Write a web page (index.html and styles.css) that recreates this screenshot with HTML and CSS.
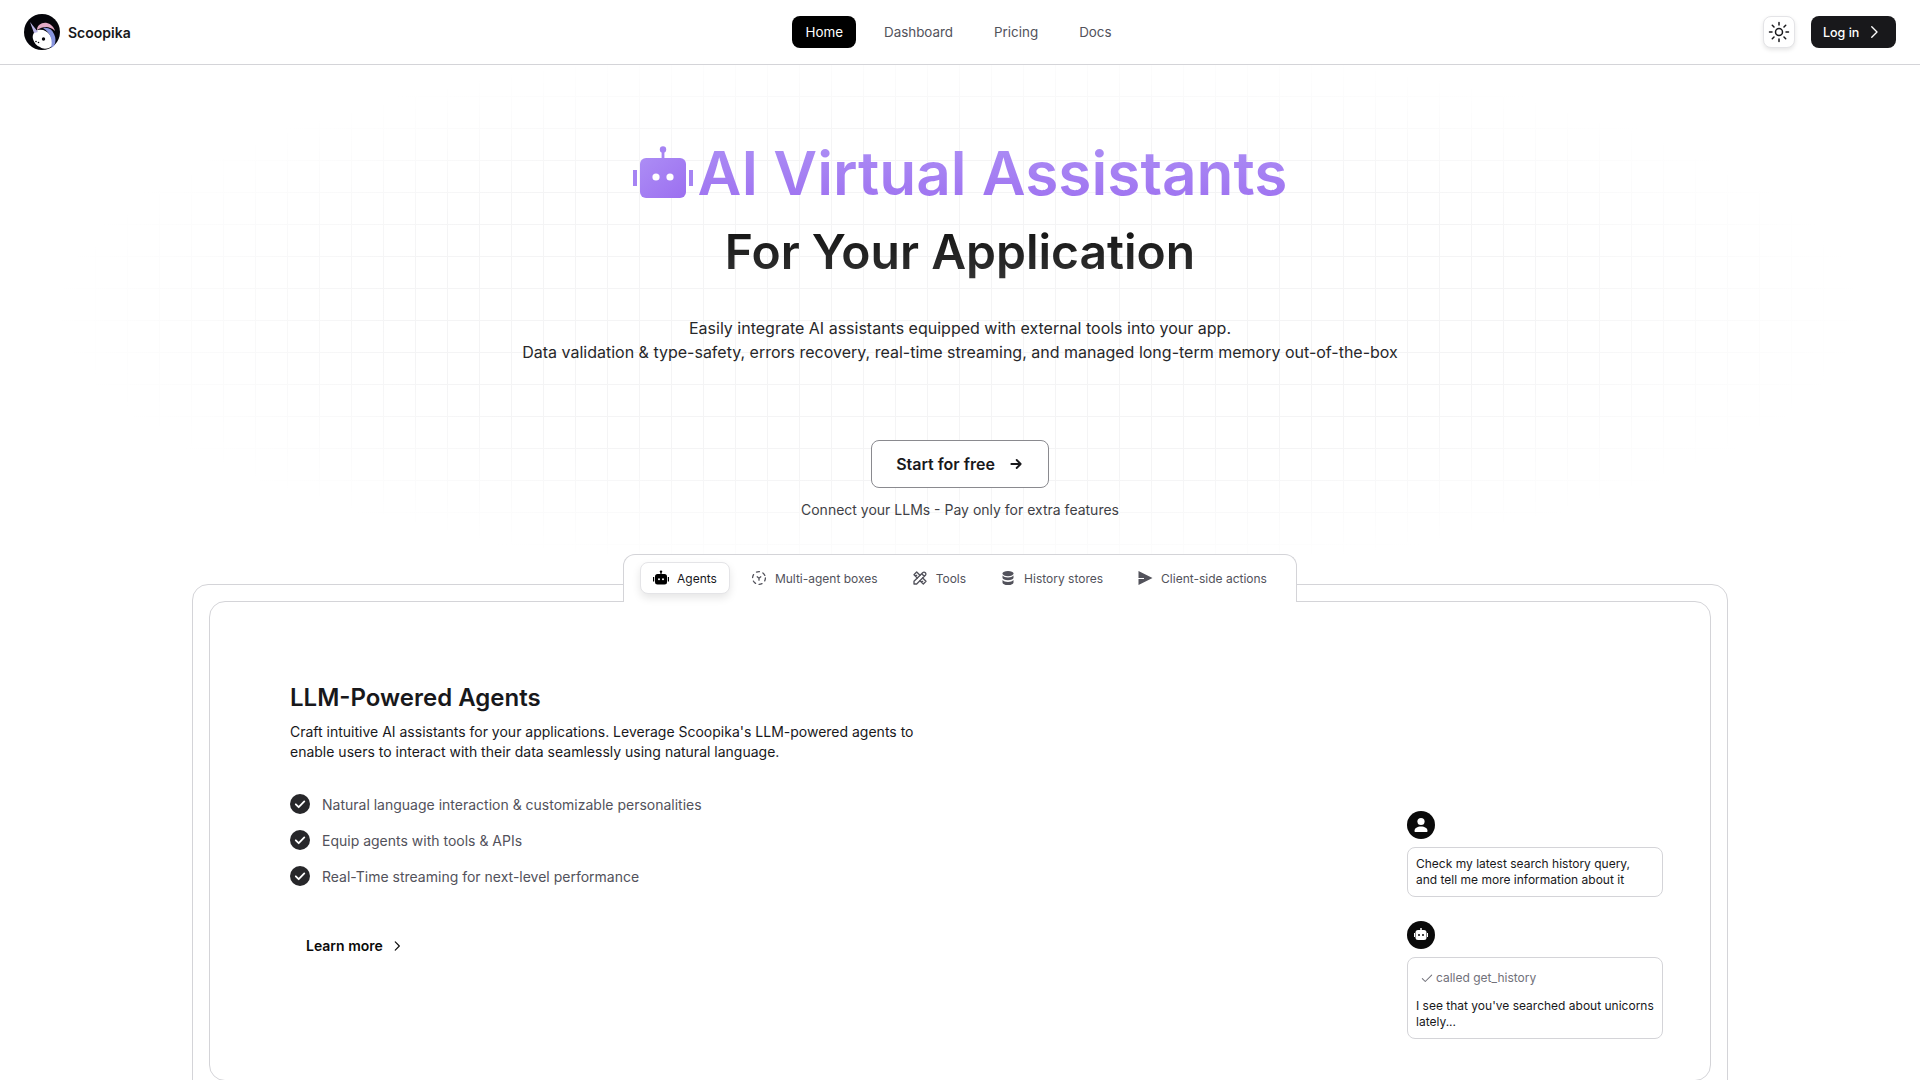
FILE: index.html
```html
<!DOCTYPE html>
<html lang="en">

<head>
  <meta charset="UTF-8">
  <meta name="viewport" content="width=device-width, initial-scale=1.0">
  <title>Scoopika</title>
  <link rel="stylesheet" href="styles.css">
</head>

<body>
  <nav class="navbar">
    <a href="#" class="brand">
      <svg class="brand-logo" viewBox="0 0 36 36">
        <circle cx="18" cy="18" r="18" fill="#05050a" />
        <path d="M9 25c-1-4 1-8 5-9 5-1 9 1 12 5 2 3 3 6 3 8 0 2-2 4-4 5-3 1-7 1-9-1-3-1-6-4-7-8z" fill="#fff" />
        <path d="M6 8l8 10-4 1z" fill="#b9b4e6" />
        <path d="M13 16c0-5 5-8 10-7 4 1 7 4 8 8-3-3-6-4-9-4-3 0-6 1-9 3z" fill="#e3aac6" />
        <path d="M19 14c5-1 9 1 11 6 2 4 2 8 0 12l-3 2c2-7 0-15-8-20z" fill="#8794de" />
        <circle cx="19.500" cy="25" r="1.700" fill="#05050a" />
        <circle cx="12" cy="27.500" r=".8" fill="#05050a" />
        <circle cx="14.500" cy="28.500" r=".8" fill="#05050a" />
      </svg>
      <span>Scoopika</span>
    </a>
    <div class="nav-links">
      <a href="#" class="nav-link active">Home</a>
      <a href="#" class="nav-link">Dashboard</a>
      <a href="#" class="nav-link">Pricing</a>
      <a href="#" class="nav-link">Docs</a>
    </div>
    <div class="nav-actions">
      <button class="theme-btn" aria-label="Theme">
        <svg viewBox="0 0 24 24" class="icon-stroke">
          <circle cx="12" cy="12" r="3.500" />
          <path d="M2.500 12H5M19 12h2.500M12 2.500V5M12 19v2.500M5.300 5.300L7 7M17 17l1.700 1.700M5.300 18.700L7 17M17 7l1.700-1.700" />
        </svg>
      </button>
      <a href="#" class="login-btn">
        Log in
        <svg viewBox="0 0 24 24" class="icon-stroke">
          <path d="M9 5l7 7-7 7" />
        </svg>
      </a>
    </div>
  </nav>

  <header class="hero">
    <h1 class="hero-title">
      <svg class="hero-robot" viewBox="0 0 60 52">
        <defs>
          <linearGradient id="robotFill" x1="0" y1="0" x2="1" y2="1">
            <stop offset="0" stop-color="#ac8df5" />
            <stop offset="1" stop-color="#9c6ff0" />
          </linearGradient>
        </defs>
        <circle cx="30" cy="3.500" r="3.200" fill="#a684f3" />
        <rect x="28.600" y="4" width="2.800" height="9" fill="#a684f3" />
        <rect x="7" y="12" width="46" height="40" rx="6" fill="url(#robotFill)" />
        <rect x="0" y="24" width="4" height="16" fill="#a684f3" />
        <rect x="56" y="24" width="4" height="16" fill="#a684f3" />
        <circle cx="23" cy="31" r="3.600" fill="#fff" />
        <circle cx="37" cy="31" r="3.600" fill="#fff" />
      </svg>
      <span class="gradient-text">AI Virtual Assistants</span>
    </h1>
    <h2 class="hero-sub">For Your Application</h2>
    <p class="hero-text">Easily integrate AI assistants equipped with external tools into your app.<br>Data validation &amp; type-safety, errors recovery, real-time streaming, and managed long-term memory out-of-the-box</p>
    <a href="#" class="start-btn">
      Start for free
      <svg viewBox="0 0 24 24" class="icon-stroke">
        <path d="M5 12h14M13 6l6 6-6 6" />
      </svg>
    </a>
    <p class="hero-note">Connect your LLMs - Pay only for extra features</p>
  </header>

  <section class="showcase">
    <div class="tabs-wrap">
      <div class="tabs">
        <div class="tab active">
          <svg viewBox="0 0 16 16" class="tab-icon">
            <circle cx="8" cy="1.600" r="1.200" />
            <rect x="7.400" y="2" width="1.200" height="2.500" />
            <rect x="2" y="4" width="12" height="10.500" rx="2.500" />
            <rect x="0" y="7" width="1.200" height="4.500" />
            <rect x="14.800" y="7" width="1.200" height="4.500" />
            <circle cx="6" cy="9.200" r="1" fill="#fff" />
            <circle cx="10" cy="9.200" r="1" fill="#fff" />
          </svg>
          Agents
        </div>
        <div class="tab">
          <svg viewBox="0 0 16 16" class="tab-icon tab-icon-line">
            <circle cx="8" cy="8" r="6.400" stroke-dasharray="3 3.700" />
            <path d="M6.200 6.800L8 8.200l1.800-1.400M8 8.200v2" />
          </svg>
          Multi-agent boxes
        </div>
        <div class="tab">
          <svg viewBox="0 0 24 24" class="tab-icon tab-icon-line tab-icon-tools">
            <path d="M3 21h4L20 8a1.500 1.500 0 0 0-4-4L3 17v4M14.500 5.500l4 4" />
            <path d="M12 8L7 3 3 7l5 5M7 8L5.500 9.500M16 12l5 5-4 4-5-5M16 17l-1.500 1.500" />
          </svg>
          Tools
        </div>
        <div class="tab">
          <svg viewBox="0 0 16 16" class="tab-icon">
            <ellipse cx="8" cy="3.600" rx="5.500" ry="2.600" />
            <path d="M2.500 5.600v2.200c0 1.400 2.500 2.500 5.500 2.500s5.500-1.100 5.500-2.500V5.600c-1 1.300-3.100 2-5.500 2s-4.500-.7-5.500-2z" />
            <path d="M2.500 10.100v2.300c0 1.400 2.500 2.600 5.500 2.600s5.500-1.200 5.500-2.600v-2.300c-1 1.300-3.100 2-5.500 2s-4.500-.7-5.500-2z" />
          </svg>
          History stores
        </div>
        <div class="tab">
          <svg viewBox="0 0 16 16" class="tab-icon">
            <path d="M1.500 1L15.500 8 1.500 15V9h5.500V8H1.500z" />
          </svg>
          Client-side actions
        </div>
      </div>
    </div>

    <div class="outer-card">
      <div class="inner-card">
        <div class="feature">
          <h3 class="feature-title">LLM-Powered Agents</h3>
          <p class="feature-text">Craft intuitive AI assistants for your applications. Leverage Scoopika's LLM-powered agents to enable users to interact with their data seamlessly using natural language.</p>
          <ul class="feature-list">
            <li>
              <svg viewBox="0 0 20 20" class="check-icon">
                <circle cx="10" cy="10" r="10" />
                <path d="M5.800 10.300l2.900 2.900 5.600-5.800" />
              </svg>
              Natural language interaction &amp; customizable personalities
            </li>
            <li>
              <svg viewBox="0 0 20 20" class="check-icon">
                <circle cx="10" cy="10" r="10" />
                <path d="M5.800 10.300l2.900 2.900 5.600-5.800" />
              </svg>
              Equip agents with tools &amp; APIs
            </li>
            <li>
              <svg viewBox="0 0 20 20" class="check-icon">
                <circle cx="10" cy="10" r="10" />
                <path d="M5.800 10.300l2.900 2.900 5.600-5.800" />
              </svg>
              Real-Time streaming for next-level performance
            </li>
          </ul>
          <a href="#" class="learn-more">
            Learn more
            <svg viewBox="0 0 24 24" class="icon-stroke">
              <path d="M9 5l7 7-7 7" />
            </svg>
          </a>
        </div>

        <div class="chat">
          <div class="avatar">
            <svg viewBox="0 0 28 28">
              <circle cx="14" cy="10.500" r="3.600" fill="#fff" />
              <path d="M7.500 20c0-3 2.800-4.600 6.500-4.600s6.500 1.600 6.500 4.600c0 .6-.4 1-1 1h-11c-.6 0-1-.4-1-1z" fill="#fff" />
            </svg>
          </div>
          <div class="bubble">Check my latest search history query, and tell me more information about it</div>
          <div class="avatar avatar-bot">
            <svg viewBox="0 0 28 28">
              <circle cx="14" cy="8" r="1" fill="#fff" />
              <rect x="8.500" y="9" width="11" height="10" rx="2.500" fill="#fff" />
              <rect x="7" y="12" width="1" height="4" fill="#fff" />
              <rect x="20" y="12" width="1" height="4" fill="#fff" />
              <circle cx="12" cy="14" r="1" fill="#0a0a0a" />
              <circle cx="16" cy="14" r="1" fill="#0a0a0a" />
            </svg>
          </div>
          <div class="bubble">
            <div class="tool-call">
              <svg viewBox="0 0 24 24" class="icon-stroke">
                <path d="M4 13l5 5L20 7" />
              </svg>
              called get_history
            </div>
            I see that you've searched about unicorns lately...
          </div>
        </div>
      </div>
    </div>
  </section>
</body>

</html>
```
FILE: styles.css
```css
:root {
  --dark-color: #18181b;
  --border-color: #d4d4d8;
  --muted-color: #52525b;
  --grid-color: #f4f4f5;
}

* {
  margin: 0;
  padding: 0;
  box-sizing: border-box;
}

body {
  font-family: 'Inter', 'Liberation Sans', sans-serif;
  background-color: #fff;
  color: var(--dark-color);
  height: 100vh;
  overflow: hidden;
}

a {
  color: inherit;
  text-decoration: none;
}

.icon-stroke {
  fill: none;
  stroke: currentColor;
  stroke-width: 2;
  stroke-linecap: round;
  stroke-linejoin: round;
}

/* navbar */
.navbar {
  display: grid;
  grid-template-columns: 1fr auto 1fr;
  align-items: center;
  height: 65px;
  padding: 0 24px;
  border-bottom: 1px solid var(--border-color);
}

.brand {
  display: flex;
  align-items: center;
  gap: 8px;
  font-size: 14px;
  font-weight: 600;
}

.brand-logo {
  width: 36px;
  height: 36px;
}

.nav-links {
  display: flex;
  align-items: center;
  gap: 15px;
  margin-right: 3px;
}

.nav-link {
  display: flex;
  align-items: center;
  height: 32px;
  padding: 0 13px;
  border-radius: 8px;
  font-size: 13.4px;
  color: var(--muted-color);
}

.nav-link.active {
  background-color: #000;
  color: #fff;
}

.nav-actions {
  display: flex;
  justify-content: flex-end;
  align-items: center;
  gap: 16px;
}

.theme-btn {
  display: flex;
  align-items: center;
  justify-content: center;
  width: 32px;
  height: 32px;
  background: #fff;
  border: 1px solid #e4e4e7;
  border-radius: 8px;
  box-shadow: 0 2px 4px rgba(0, 0, 0, 0.1);
  color: #18181b;
}

.theme-btn svg {
  width: 24px;
  height: 24px;
  stroke-width: 1.5;
}

.login-btn {
  display: flex;
  align-items: center;
  justify-content: space-between;
  width: 85px;
  height: 32px;
  padding: 0 13px 0 12px;
  background-color: #18181b;
  border-radius: 8px;
  color: #fff;
  font-size: 12.5px;
  font-weight: 500;
}

.login-btn svg {
  width: 18px;
  height: 18px;
  stroke-width: 1.8;
}

/* hero */
.hero {
  display: flex;
  flex-direction: column;
  align-items: center;
  height: 489px;
  padding-top: 73px;
  text-align: center;
  background-image:
    radial-gradient(ellipse 47% 56% at 50% 50%, rgba(255, 255, 255, 0) 62%, #fff 100%),
    linear-gradient(to right, transparent 31px, var(--grid-color) 31px),
    linear-gradient(to bottom, transparent 31px, var(--grid-color) 31px);
  background-size: 100% 100%, 32px 32px, 32px 32px;
  background-position: 0 0, 0 0, 0 0;
}

.hero-title {
  display: flex;
  align-items: center;
  gap: 5px;
  font-size: 60.3px;
  line-height: 72px;
  font-weight: 600;
}

.hero-robot {
  width: 60px;
  height: 52px;
  margin-top: -4px;
}

.gradient-text {
  background: linear-gradient(to bottom, #ad90f5, #9d6ff0);
  -webkit-background-clip: text;
  background-clip: text;
  color: transparent;
}

.hero-sub {
  margin-top: 14px;
  font-size: 48px;
  line-height: 56px;
  font-weight: 600;
  background: linear-gradient(to bottom, #111, #333);
  -webkit-background-clip: text;
  background-clip: text;
  color: transparent;
}

.hero-text {
  margin-top: 36px;
  font-size: 16px;
  line-height: 24px;
  color: #27272a;
}

.start-btn {
  display: flex;
  align-items: center;
  justify-content: center;
  gap: 13px;
  width: 178px;
  height: 48px;
  margin-top: 76px;
  background: #fff;
  border: 1px solid #8a8a8f;
  border-radius: 8px;
  font-size: 16px;
  font-weight: 600;
}

.start-btn svg {
  width: 16px;
  height: 16px;
  stroke-width: 2.8;
}

.hero-note {
  margin-top: 12px;
  font-size: 14px;
  line-height: 20px;
  color: #3f3f46;
}

/* tabs + cards */
.showcase {
  padding: 0 192px;
}

.tabs-wrap {
  position: relative;
  z-index: 1;
  display: flex;
  justify-content: center;
  margin-bottom: -18px;
}

.tabs {
  display: flex;
  align-items: flex-start;
  gap: 8px;
  height: 48px;
  padding: 7px 16px 0;
  background: #fff;
  border: 1px solid var(--border-color);
  border-bottom: none;
  border-radius: 12px 12px 0 0;
}

.tab {
  display: flex;
  align-items: center;
  gap: 8px;
  height: 32px;
  padding: 0 12px;
  border: 1px solid transparent;
  border-radius: 8px;
  font-size: 12px;
  color: #52525b;
}

.tab.active {
  background: #fff;
  border-color: #e4e4e7;
  box-shadow: 0 4px 8px rgba(0, 0, 0, 0.1);
  color: #18181b;
}

.tab-icon {
  width: 16px;
  height: 16px;
  fill: currentColor;
}

.tab.active .tab-icon {
  color: #000;
}

.tab-icon-line {
  fill: none;
  stroke: currentColor;
  stroke-width: 1.3;
  stroke-linecap: round;
  stroke-linejoin: round;
}

.tab-icon-tools {
  stroke-width: 2;
}

.outer-card {
  height: 600px;
  padding: 16px;
  border: 1px solid var(--border-color);
  border-radius: 16px;
}

.inner-card {
  display: flex;
  justify-content: space-between;
  align-items: flex-start;
  height: 480px;
  padding: 80px 47px 0 80px;
  background: #fff;
  border: 1px solid var(--border-color);
  border-radius: 16px;
}

.feature {
  width: 640px;
}

.feature-title {
  font-size: 24px;
  line-height: 32px;
  font-weight: 600;
}

.feature-text {
  margin-top: 8px;
  font-size: 14px;
  line-height: 20px;
  color: #18181b;
}

.feature-list {
  display: flex;
  flex-direction: column;
  gap: 16px;
  margin-top: 32px;
  list-style: none;
}

.feature-list li {
  display: flex;
  align-items: center;
  gap: 12px;
  height: 20px;
  font-size: 14px;
  color: var(--muted-color);
}

.check-icon {
  width: 20px;
  height: 20px;
}

.check-icon circle {
  fill: #27272a;
}

.check-icon path {
  fill: none;
  stroke: #fff;
  stroke-width: 1.8;
  stroke-linecap: round;
  stroke-linejoin: round;
}

.learn-more {
  display: inline-flex;
  align-items: center;
  gap: 7px;
  margin: 50px 0 0 16px;
  font-size: 14px;
  line-height: 20px;
  font-weight: 600;
  color: #0a0a0a;
}

.learn-more svg {
  width: 14px;
  height: 14px;
}

/* chat preview */
.chat {
  display: flex;
  flex-direction: column;
  align-items: flex-start;
  width: 256px;
  margin-top: 129px;
}

.avatar {
  width: 28px;
  height: 28px;
  margin-bottom: 8px;
  background-color: #0a0a0a;
  border-radius: 50%;
}

.avatar-bot {
  margin-top: 24px;
}

.bubble {
  width: 100%;
  padding: 8px;
  border: 1px solid var(--border-color);
  border-radius: 8px;
  font-size: 12px;
  line-height: 16px;
  color: #18181b;
}

.tool-call {
  display: flex;
  align-items: center;
  gap: 2px;
  margin: 4px 0 12px 4px;
  color: #71717a;
}

.tool-call svg {
  width: 14px;
  height: 14px;
  stroke-width: 1.8;
}
```
